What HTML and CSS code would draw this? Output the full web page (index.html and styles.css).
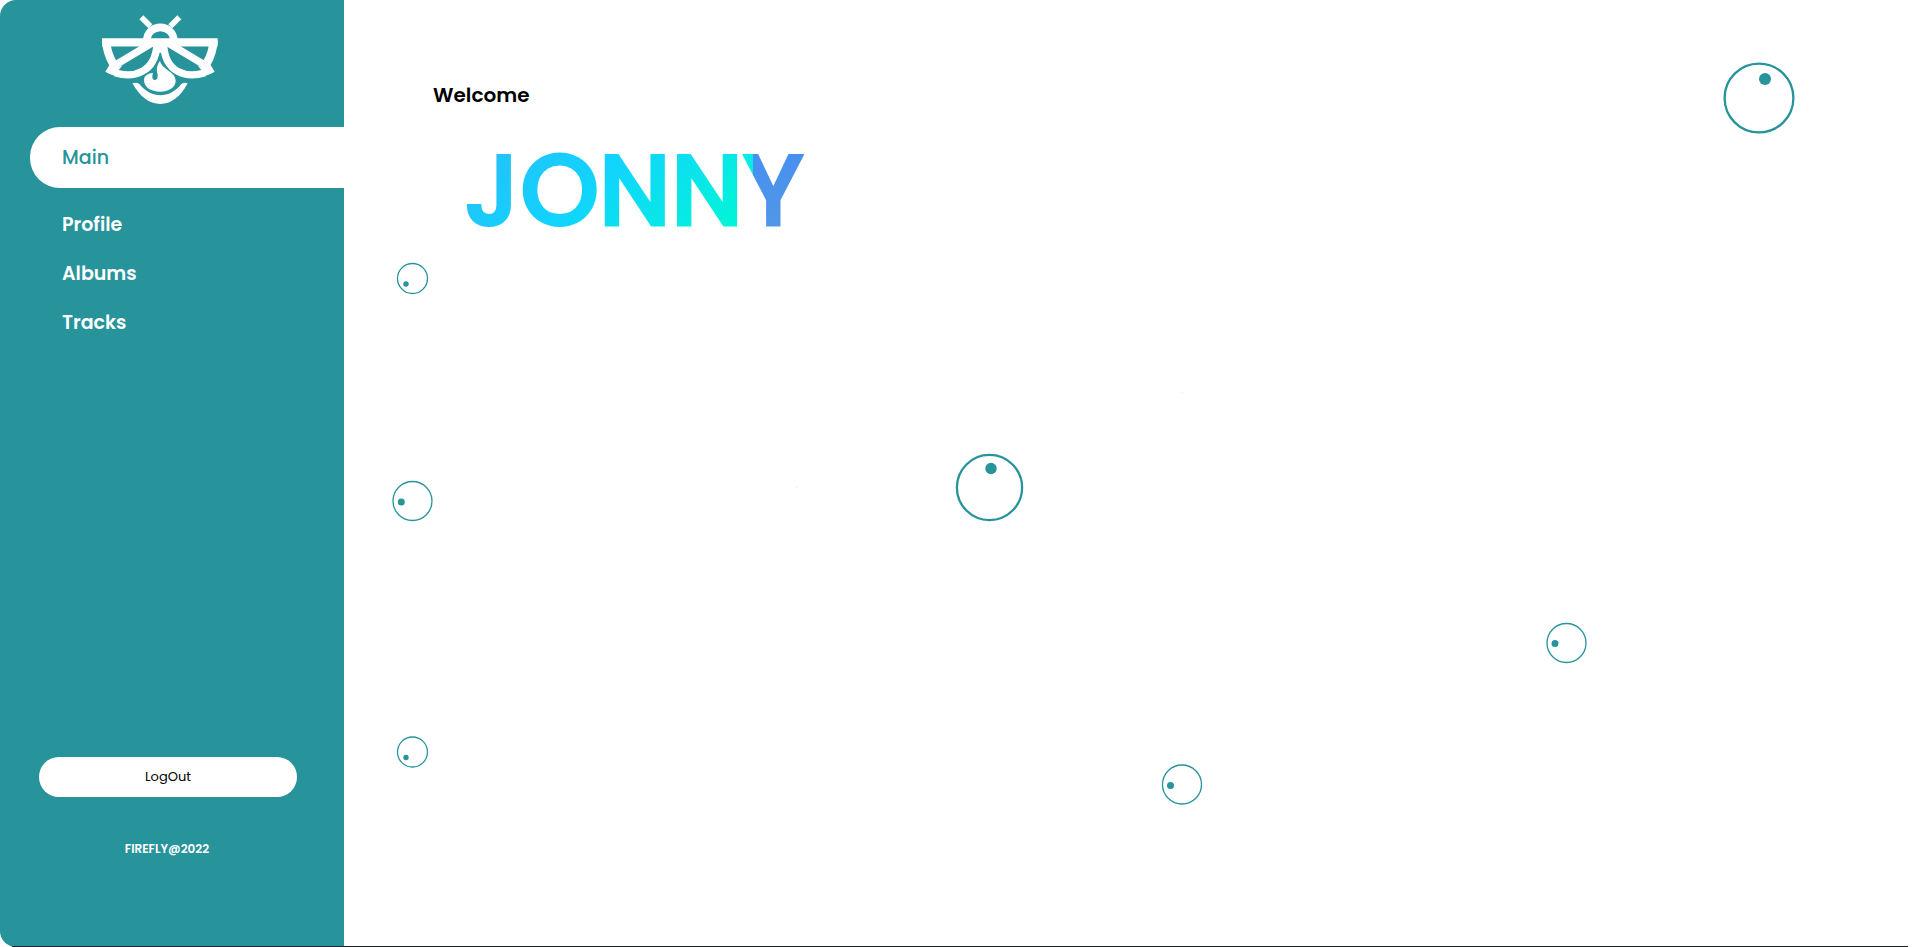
FILE: index.html
```html
<!DOCTYPE html>
<html lang="en">
<head>
<meta charset="utf-8">
<title>Firefly</title>
<link rel="stylesheet" href="styles.css">
</head>
<body>
<div class="app">
  <aside class="sidebar">
    <svg class="logo" viewBox="0 0 420 345" role="img" aria-label="Firefly">
      <g fill="none" stroke="#fff">
        <path d="M160 58L175 73M262 58L247 73" stroke-width="17" stroke-linecap="square"/>
        <path d="M36 127H383" stroke-width="25"/>
        <path d="M170 125C170 68 252 68 252 125" stroke-width="23"/>
        <path d="M49 120C49 148 58 172 70 192M370 120C370 148 361 172 349 192" stroke-width="25"/>
        <path d="M74 196L188 128M346 196L232 128" stroke-width="22"/>
        <path d="M76 219C130 234 196 220 201 132M344 219C290 234 224 220 221 132" stroke-width="22"/>
      </g>
      <g fill="#fff">
        <path d="M62 189L46 215Q64 226 92 232L84 212L96 198ZM358 189L374 215Q356 226 328 232L336 212L324 198Z"/>
        <path d="M188 124H234L222 158H200Z"/>
        <path d="M127 250Q140 245 148 252C185 297 238 297 274 252Q282 246 293 250C270 292 243 312 211 312C177 312 150 290 127 250Z"/>
        <path d="M210 182C216 210 257 213 257 243C257 263 235 275 210 275C184 275 162 263 162 241C162 226 174 220 189 219C184 234 189 241 196 240C204 238 204 229 202 220C198 207 202 193 210 182Z"/>
      </g>
    </svg>
    <nav class="nav">
      <a class="nav-link active" href="#main">Main</a>
      <a class="nav-link" href="#profile">Profile</a>
      <a class="nav-link" href="#albums">Albums</a>
      <a class="nav-link" href="#tracks">Tracks</a>
    </nav>
    <button class="logout" type="button">LogOut</button>
    <p class="copyright">FIREFLY@2022</p>
  </aside>
  <main class="main">
    <svg class="bubbles" aria-hidden="true">
      <g fill="none" stroke="#27939b">
        <g stroke-width="2.3"><circle cx="1415" cy="98" r="34.4"/><circle cx="645.5" cy="487.5" r="32.6"/></g>
        <g stroke-width="1.3"><circle cx="68.5" cy="278.5" r="15"/><circle cx="68.5" cy="501" r="19.5"/><circle cx="1222.5" cy="643" r="19.5"/><circle cx="838" cy="784.5" r="19.5"/><circle cx="68.5" cy="752" r="15"/></g>
      </g>
      <g fill="#27939b">
        <circle cx="1421" cy="79" r="6"/><circle cx="647" cy="468.5" r="5.7"/>
        <circle cx="62" cy="284" r="2.7"/><circle cx="57.3" cy="502" r="3.5"/>
        <circle cx="1211" cy="643.5" r="3.5"/><circle cx="826.5" cy="785.5" r="3.5"/>
        <circle cx="62" cy="757.5" r="2.7"/>
        <circle cx="838" cy="392" r=".5" opacity=".3"/><circle cx="453" cy="487" r=".5" opacity=".3"/>
      </g>
    </svg>
    <p class="welcome">Welcome</p>
    <h1 class="name">JONNY</h1>
  </main>
</div>
</body>
</html>
```
FILE: styles.css
```css
* { box-sizing: border-box; }
body {
  margin: 0;
  background: #fff;
  font-family: Poppins, Inter, sans-serif;
}
.app {
  position: relative;
  display: flex;
  min-height: 100vh;
}
.app::after {
  content: "";
  position: absolute;
  left: 12px;
  right: 10px;
  bottom: 0;
  height: 1px;
  background: #1c2329;
}
.sidebar {
  display: flex;
  flex-direction: column;
  width: 344px;
  flex-shrink: 0;
  padding-bottom: 86px;
  background: #27939b;
  border-radius: 16px 0 0 16px;
}
.logo {
  width: 140px;
  height: 115px;
  margin-left: 90px;
}
.nav {
  display: flex;
  flex-direction: column;
  margin: 12px 0 auto 30px;
}
.nav-link {
  padding: 10px 0 9px 32px;
  color: #fff;
  font-size: 19px;
  font-weight: 600;
  line-height: 30px;
  text-decoration: none;
}
.nav-link.active {
  margin-bottom: 12px;
  padding-top: 16px;
  padding-bottom: 15px;
  color: #27939b;
  font-weight: 500;
  background: #fff;
  border-radius: 30px 0 0 30px;
}
.logout {
  height: 40px;
  margin: 0 47px 40px 39px;
  border: 0;
  border-radius: 20px;
  background: #fff;
  color: #000;
  font: 400 13px Poppins, Inter, sans-serif;
}
.copyright {
  margin: 0 10px 0 0;
  color: #fff;
  font-size: 12px;
  font-weight: 600;
  line-height: 24px;
  text-align: center;
}
.main {
  position: relative;
  flex: 1;
  padding: 80px 89px;
}
.bubbles {
  position: absolute;
  inset: 0;
  width: 100%;
  height: 100%;
}
.welcome {
  margin: 0;
  font-size: 20px;
  font-weight: 600;
  line-height: 30px;
}
.name {
  width: max-content;
  margin: 20px 0 0 31px;
  padding-right: 8px;
  font-size: 100px;
  font-weight: 500;
  line-height: 120px;
  color: transparent;
  -webkit-text-stroke: 3px transparent;
  background:
    linear-gradient(135deg, #2bbcf6, #12d2ff 42%, #00f8d4 94%) 0 0 / 289px 100% no-repeat,
    linear-gradient(160deg, #438cf5, #569be0) 289px 0 / 64px 100% no-repeat;
  -webkit-background-clip: text;
  background-clip: text;
}
```
